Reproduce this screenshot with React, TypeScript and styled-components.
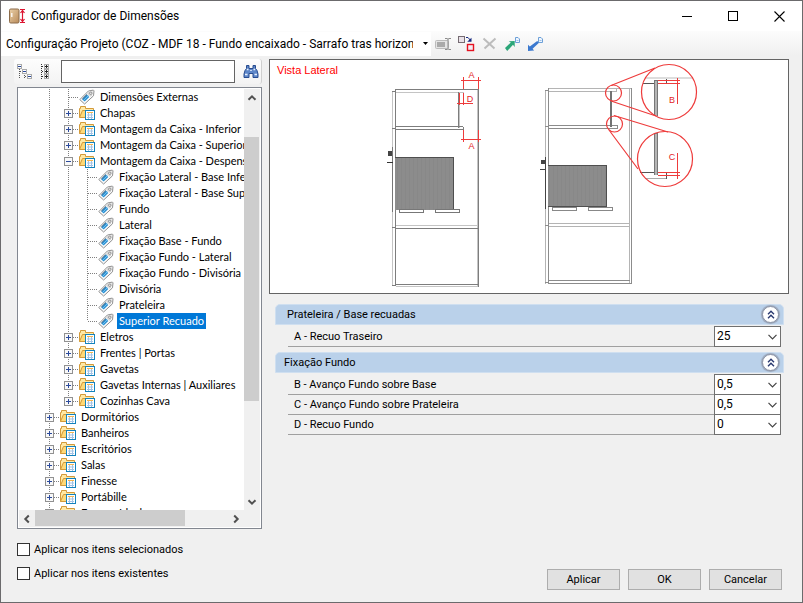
import React from 'react';
import styled, { createGlobalStyle } from 'styled-components';

const Global = createGlobalStyle`
  * { box-sizing: border-box; }
  html, body { margin: 0; background: #f0f0f0; }
  body, button, select, input { font-family: Roboto, "Liberation Sans", sans-serif; font-size: 11px; color: #000; }
  button, select, input { margin: 0; padding: 0; border: 0; border-radius: 0; background: none; }
  svg { display: block; flex: none; }
`;

const Window = styled.div`
  display: flex; flex-direction: column; height: 100vh; min-height: 480px;
  border: 1px solid #6b6a6c; background: #f0f0f0;
`;
const TitleBar = styled.header`
  display: flex; align-items: center; height: 30px; padding-left: 8px; background: #fff;
`;
const Title = styled.h1`
  flex: 1; margin: 0 0 0 5px; font-size: 12px; font-weight: 400;
`;
const WindowButton = styled.button`
  display: grid; place-items: center; width: 46px; height: 30px;
`;
const ToolBar = styled.div`
  display: flex; align-items: center; height: 25px;
  background: linear-gradient(#fcfcfc, #f0f0f0);
`;
const ProjectPicker = styled.label`
  position: relative; flex: 0 1 430px; min-width: 0; background: #fff;
  svg { position: absolute; right: 3px; top: 10px; pointer-events: none; }
`;
const ProjectSelect = styled.select`
  appearance: none; width: 100%; height: 24px; padding: 0 18px 0 5px; overflow: hidden;
  font-size: 12px; background: #fff;
`;
const Tools = styled.div`
  display: flex; gap: 3px; margin-left: 2px;
`;
const ToolButton = styled.button`
  display: grid; place-items: center; width: 20px; height: 22px;
`;
const Body = styled.main`
  display: flex; flex: 1; min-height: 0; gap: 7px; padding: 3px 13px 12px 13px;
`;
const Side = styled.div`
  display: flex; flex-direction: column; flex: 0 0 248px; min-height: 0;
`;
const SearchBar = styled.div`
  display: flex; align-items: center; height: 25px; padding-left: 1px;
  border-right: 1px solid #cfcfcf; border-radius: 3px;
  background: linear-gradient(#fdfdfd, #f3f3f3);
`;
const SearchInput = styled.input`
  flex: 1; min-width: 0; height: 23px; margin: 0 6px; padding: 0 4px;
  border: 1px solid #646464; background: #fff;
`;
const TreePane = styled.div`
  display: grid; grid-template-columns: minmax(0, 1fr) 16px; grid-template-rows: minmax(0, 1fr) 17px;
  flex: 1; min-height: 0; margin: 3px 0 0 3px; padding: 1px;
  border: 1px solid #828790; background: #fff;
`;
const Tree = styled.ul`
  margin: 0; padding: 0 0 0 21px; overflow: hidden; list-style: none;
  font-family: Lato, "Liberation Sans", sans-serif;
`;
const TreeRow = styled.li`
  display: flex; height: 16px; white-space: nowrap;
`;
const TreeIcon = styled.span`
  width: 20px; flex: none; padding-left: 1px;
`;
const TreeLabel = styled.span<{ $selected?: boolean }>`
  padding: 0 2px; line-height: 16px;
  color: ${p => (p.$selected ? '#fff' : '#000')};
  background: ${p => (p.$selected ? '#0078d7' : 'transparent')};
`;
const ScrollBar = styled.div<{ $horizontal?: boolean }>`
  display: flex; flex-direction: ${p => (p.$horizontal ? 'row' : 'column')}; background: #f0f0f0;
`;
const ScrollArrow = styled.button`
  display: grid; place-items: center; flex: none; width: 16px; height: 17px;
`;
const Track = styled.div<{ $horizontal?: boolean }>`
  display: flex; flex: 1; flex-direction: ${p => (p.$horizontal ? 'row' : 'column')};
`;
const Space = styled.div<{ $grow: number }>`
  flex: ${p => p.$grow} 1 0;
`;
const Thumb = styled.div<{ $grow: number; $horizontal?: boolean }>`
  flex: ${p => p.$grow} 1 0; background: #cdcdcd;
  margin: ${p => (p.$horizontal ? '0 0 1px' : '0 1px 0 0')};
`;
const Corner = styled.div`
  background: #f0f0f0;
`;
const Checks = styled.div`
  display: flex; flex-direction: column; gap: 8px; padding: 12px 0 9px 3px;
`;
const CheckLabel = styled.label`
  display: flex; align-items: center; gap: 4px; height: 16px;
`;
const CheckBox = styled.input`
  appearance: none; width: 13px; height: 13px; border: 1px solid #333; background: #fff;
  &:checked { background: #0078d7; }
`;
const Content = styled.div`
  display: flex; flex-direction: column; flex: 1; min-width: 0;
`;
const Viewer = styled.section`
  border: 1px solid #646464; background: #fff; overflow: hidden;
`;
const Params = styled.div`
  display: flex; flex-direction: column; gap: 5px; padding: 10px 5px 0 6px;
`;
const GroupHeader = styled.h2<{ $indent: number }>`
  display: flex; align-items: center; justify-content: space-between; height: 21px;
  margin: 0 0 2px; padding: 0 4px 0 ${p => p.$indent}px;
  border: 1px solid #cfdff0; border-radius: 5px 5px 0 0; background: #bad1ea;
  font-size: 11px; font-weight: 400;
`;
const CollapseButton = styled.button`
  display: grid; place-items: center; width: 17px; height: 17px;
  border: 1px solid #8a93a6; border-radius: 50%; background: #fff;
  box-shadow: 0 0 1px 1px #9aa5b8;
`;
const ParamRow = styled.label`
  display: flex; align-items: flex-end; height: 20px; margin: 0 3px 0 13px;
  border-bottom: 1px solid #a0a0a0;
`;
const ParamName = styled.span`
  flex: 1; padding-left: 6px; line-height: 18px;
`;
const ValueBox = styled.span`
  position: relative; width: 67px; height: 21px; margin-bottom: -1px;
  svg { position: absolute; right: 4px; top: 8px; pointer-events: none; }
`;
const ValueSelect = styled.select`
  appearance: none; display: block; width: 100%; height: 100%; padding: 0 16px 2px 2px;
  border: 1px solid #707070; background: #fff; font-size: 12px;
`;
const Footer = styled.footer`
  display: flex; justify-content: flex-end; gap: 8px; margin-top: auto; padding-right: 7px;
`;
const PushButton = styled.button`
  width: 73px; height: 21px; border: 1px solid #adadad; background: #e1e1e1; font-size: 11px;
`;

type Kind = 'folder' | 'tag';
type Node = { text: string; level: number; kind: Kind; open?: boolean; selected?: boolean; last?: boolean };
const f = (text: string, level: number, extra: Partial<Node> = {}): Node => ({ text, level, kind: 'folder', ...extra });
const t = (text: string, level: number, extra: Partial<Node> = {}): Node => ({ text, level, kind: 'tag', ...extra });

const nodes: Node[] = [
  t('Dimensões Externas', 1),
  f('Chapas', 1),
  f('Montagem da Caixa - Inferior', 1),
  f('Montagem da Caixa - Superior', 1),
  f('Montagem da Caixa - Despensa', 1, { open: true }),
  t('Fixação Lateral - Base Inferior', 2),
  t('Fixação Lateral - Base Superior', 2),
  t('Fundo', 2),
  t('Lateral', 2),
  t('Fixação Base - Fundo', 2),
  t('Fixação Fundo - Lateral', 2),
  t('Fixação Fundo - Divisória', 2),
  t('Divisória', 2),
  t('Prateleira', 2),
  t('Superior Recuado', 2, { selected: true, last: true }),
  f('Eletros', 1),
  f('Frentes | Portas', 1),
  f('Gavetas', 1),
  f('Gavetas Internas | Auxiliares', 1),
  f('Cozinhas Cava', 1, { last: true }),
  f('Dormitórios', 0),
  f('Banheiros', 0),
  f('Escritórios', 0),
  f('Salas', 0),
  f('Finesse', 0),
  f('Portábille', 0),
  f('Formas Ideal', 0),
];

const Expander = ({ x, y, open }: { x: number; y: number; open?: boolean }) => (
  <g>
    <rect x={x + 0.5} y={y + 0.5} width="8" height="8" rx="1" fill="#f8f8f8" stroke="#919191" />
    <path d={`M${x + 2} ${y + 4.5}h5${open ? '' : `M${x + 4.5} ${y + 2}v5`}`} stroke="#2b4a9b" />
  </g>
);

const Guides = ({ node }: { node: Node }) => (
  <svg width={(node.level + 1) * 19} height="16" fill="none" shapeRendering="crispEdges">
    {Array.from({ length: node.level + 1 }, (_, i) => {
      const own = i === node.level;
      return <path key={i} d={`M${i * 19 + 9.5} 0v${own && node.last ? 8 : 16}`} stroke="#808080" strokeDasharray="1 1" />;
    })}
    <path d={`M${node.level * 19 + 10} 8.5h9`} stroke="#808080" strokeDasharray="1 1" />
    {node.kind === 'folder' && <Expander x={node.level * 19 + 5} y={4} open={node.open} />}
  </svg>
);

const FolderIcon = () => (
  <svg width="17" height="16" viewBox="0 0 17 16" fill="none">
    <path d="M.5 12.500V3.500h1v-2h5v2h8v6" fill="#ffe9a6" stroke="#d39a3a" />
    <path d="M.5 12.500 3.500 5.500h11l-2 7z" fill="#ffd977" stroke="#d39a3a" />
    <rect x="6.500" y="5.500" width="9" height="9" fill="#fff" stroke="#1483bd" />
    <path d="M8 7.500h6" stroke="#f4b44f" />
    <path d="M8 10h6M8 12.500h6M9.500 8v6M12.500 8v6" stroke="#a3c4e6" />
  </svg>
);
const TagIcon = () => (
  <svg width="16" height="16" viewBox="0 0 16 16" fill="none">
    <path d="M.8 10.600 9.400 2l4.900-.9.700.7-.5 5L5.600 15z" fill="#fafafa" stroke="#8f8f8f" strokeLinejoin="round" />
    <path d="m9.700 3 4-.8-.6 4-1.500 1.600-3.500-3.200z" fill="#d5d5d5" />
    <circle cx="11.800" cy="4.200" r="1.200" fill="#fff" stroke="#777" strokeWidth=".8" />
    <path d="m3.300 10.200 4.600-4.600 2.400 2.400-4.600 4.600z" fill="#2b91d4" />
    <path d="m4.500 11.500 4.800-4.800" stroke="#75c3ef" />
    <path d="m3.200 10.200 4.700-4.700" stroke="#315b7b" />
  </svg>
);

const Chevron = ({ turn = 0 }: { turn?: number }) => (
  <svg width="10" height="10" viewBox="0 0 10 10" fill="none">
    <path transform={`rotate(${turn} 5 5)`} d="M1.500 3.200 5 6.700l3.500-3.500" stroke="#505050" strokeWidth="2" />
  </svg>
);
const SelectArrow = () => (
  <svg width="9" height="6" viewBox="0 0 9 6" fill="none">
    <path d="M.5.800l4 4 4-4" stroke="#444" strokeWidth="1.200" />
  </svg>
);
const DoubleUp = () => (
  <svg width="8" height="9" viewBox="0 0 8 9" fill="none">
    <path d="M1 4.200 4 1.200l3 3M1 8.200l3-3 3 3" stroke="#29386f" strokeWidth="1.400" />
  </svg>
);

const AppIcon = () => (
  <svg width="17" height="17" viewBox="0 0 17 17" fill="none">
    <defs><linearGradient id="wood" x2="1" y2="1"><stop stopColor="#ead0a8" /><stop offset="1" stopColor="#b98b5a" /></linearGradient></defs>
    <rect x=".5" y="1" width="9.500" height="14" rx="1.300" fill="url(#wood)" stroke="#8b6b4a" />
    <path d="M2.800 5v4" stroke="#fff" strokeWidth="1.300" />
    <path d="M11 1.500h5M11 14.500h5M13.500 2v12M11.500 5l2-2.500 2 2.500M11.500 11l2 2.500 2-2.500" stroke="#dc1430" strokeWidth="1.200" />
  </svg>
);
const CollapseTreeIcon = () => (
  <svg width="16" height="17" viewBox="0 0 16 17" fill="none" shapeRendering="crispEdges">
    <path d="M2.500 6v10M3 8.500h3M7.500 10v6M8 13.500h3" stroke="#555" strokeDasharray="1 1" />
    <rect x=".5" y="1.500" width="4" height="4" fill="#fff" stroke="#aaa" /><path d="M1 3.500h3" stroke="#29499c" />
    <rect x="5.500" y="6.500" width="4" height="4" fill="#fff" stroke="#aaa" /><path d="M6 8.500h3" stroke="#29499c" />
    <rect x="10.500" y="11.500" width="4" height="4" fill="#fff" stroke="#aaa" /><path d="M11 13.500h3" stroke="#29499c" />
  </svg>
);
const ExpandTreeIcon = () => (
  <svg width="10" height="17" viewBox="0 0 10 17" fill="none" shapeRendering="crispEdges">
    <path d="M1.500 1v15M2 3.500h2M2 8.500h2M2 13.500h2" stroke="#333" strokeDasharray="1 1" />
    {[1, 6, 11].map(y => (
      <g key={y}>
        <rect x="4.500" y={y + 0.5} width="4" height="4" fill="#fff" stroke="#aaa" />
        <path d={`M5 ${y + 2.5}h3M6.500 ${y + 1}v3`} stroke="#222" />
      </g>
    ))}
  </svg>
);
const Binoculars = () => (
  <svg width="16" height="15" viewBox="0 0 16 15" fill="none">
    <path d="M3.500 1.500h2.500v3h4v-3h2.500v3l1.500 2 1 3.500v3.500H10V9.500H6v4H1V10l1-3.500 1.500-2z" fill="#5d86c8" stroke="#284c90" />
    <path d="M2 10.500h2.500M11.500 10.500h2.500M3.800 5.500h1.700M10.500 5.500h1.700" stroke="#e5effd" strokeWidth="1.600" />
    <path d="M7 6.500h2" stroke="#c7d8f3" />
  </svg>
);
const RenameIcon = () => (
  <svg width="17" height="14" viewBox="0 0 17 14" fill="none">
    <rect x=".5" y="3.500" width="13" height="8" rx="1" fill="#e4e4e4" stroke="#bbb" />
    <rect x="2" y="5" width="8" height="5" fill="#aaa" />
    <path d="M10 1.500h2l1 .7 1-.7h2M13 2v9.500M10 12.500h2l1-.7 1 .7h2" stroke="#8c8c8c" />
  </svg>
);
const ReplaceIcon = () => (
  <svg width="17" height="17" viewBox="0 0 17 17" fill="none">
    <rect x=".5" y="1.500" width="6" height="6" fill="#e9e2e8" stroke="#756b72" />
    <path d="M8 2.500h2l2.500 2.800" stroke="#182a80" /><path d="M13.500 2.800v4H9.200z" fill="#182a80" />
    <rect x="9.500" y="9.500" width="6" height="6" fill="#f3edf4" stroke="#e51220" strokeWidth="1.400" />
  </svg>
);
const DeleteIcon = () => (
  <svg width="15" height="13" viewBox="0 0 15 13" fill="none">
    <path d="m1.500 1.500 11 10M13.500 1.500l-11 10" stroke="#bcbcbc" strokeWidth="2" />
  </svg>
);
const ArrowPage = ({ up }: { up?: boolean }) => (
  <svg width="17" height="16" viewBox="0 0 17 16" fill="none">
    <path d="M11.500 1.500h2.500l1.500 1.500v3.500h-4z" fill="#eef6ff" stroke="#6da0d8" /><path d="M12.500 4.500h2" stroke="#9bc0e7" />
    {up
      ? <path d="M1 12 6.800 6.500 4.700 5.200l6-.1v5.800L9 8.800 3.200 15z" fill="#2ba678" />
      : <path d="M10.200 5 12 6.800l-6.400 6 1.500 1.800L1 15V8.800l1.800 1.800z" fill="#3b79cf" />}
  </svg>
);

const Drawing = () => (
  <svg width="518" height="233" viewBox="270 60 518 233" fill="none" fontFamily="Liberation Sans, Arial, sans-serif">
    <defs>
      <pattern id="grain" width="4" height="4" patternUnits="userSpaceOnUse">
        <rect width="4" height="4" fill="#8c8c8c" /><path d="M1.500 0v4" stroke="#888888" />
      </pattern>
    </defs>
    <text x="277" y="74" fontSize="11" fill="#ff0000">Vista Lateral</text>

    <g shapeRendering="crispEdges">
      <path d="M395 92.500h68M459.500 92v36M477.500 90v196M392.500 91v195M395 225.500h83M396 286.500h82M463.500 92v4" stroke="#c4c4c4" />
      <path d="M395.500 286V89.500h83V287M395 126.500h68M395 129.500h68v-3M458.500 92v36M395 228.500h83M395 284.500h83M392 91.500h4M392 128.500h4M392 227.500h4M392 285.500h4" stroke="#7d7d7d" />
      <path d="M392.500 147v65" stroke="#777" />
      <path d="M387 162.500h6" stroke="#333" />
      <rect x="388" y="151" width="4" height="5" fill="#444" />
      <rect x="395" y="157" width="59" height="53" fill="url(#grain)" />
      <path d="M395 157.500h58.500V210" stroke="#4f4f4f" />
      <rect x="399.500" y="209.500" width="24" height="3" fill="#fff" stroke="#777" />
      <rect x="435.500" y="209.500" width="24" height="3" fill="#fff" stroke="#777" />

      <path d="M549 91.500h67v-3M629.500 89v194M549 223.500h81M549 226.500h81M545.500 91v193M549 88.500h83" stroke="#b4b4b4" />
      <path d="M548.500 284V88M631.500 88v195.500h-83M549 125.500h68v3h-68M549 280.500h81M545 90.500h4M545 126.500h4M545 225.500h4M545 282.500h4" stroke="#8c8c8c" />
      <path d="M611 91v36" stroke="#737373" strokeWidth="2" />
      <path d="M545.500 157v52M540 169.500h6" stroke="#444" />
      <rect x="541" y="160" width="4" height="4" fill="#444" />
      <rect x="549" y="165" width="58" height="42" fill="url(#grain)" />
      <path d="M548 165.500h58.500v41H548" stroke="#4f4f4f" />
      <rect x="552.500" y="207.500" width="24" height="3" fill="#fff" stroke="#888" />
      <rect x="588.500" y="207.500" width="24" height="3" fill="#fff" stroke="#888" />

      <path d="M646 78h46" stroke="#ddd" strokeWidth="2" />
      <path d="M643 83.500h11M657 83.500h9.500v-5" stroke="#555" />
      <path d="M640 172.500h14M657 172.500h9.500v6" stroke="#555" />
      <path d="M645 178.500h21" stroke="#aaa" />
      <path d="M656 80v36M656 133v42" stroke="#777" strokeWidth="4" />
      <path d="M656 81v35M656 134v41" stroke="#b5b5b5" strokeWidth="2" />
    </g>

    <g stroke="#ee3b3b" shapeRendering="crispEdges">
      <path d="M461 80.500h20M463.500 77v12M478.500 77v12M461 139.500h20M463.500 130v12M478.500 130v12M459.500 93v12M463.500 93v12M457 103.500h16" />
      <path d="M658 80.500h22M658 83.500h22M677.500 78v26M658 172.500h22M658 175.500h22M677.500 153v26" />
    </g>
    <g stroke="#ee3b3b" strokeWidth="1.200">
      <circle cx="613.500" cy="93" r="8" /><circle cx="614.500" cy="124" r="8" />
      <circle cx="669" cy="92" r="27.500" /><circle cx="665" cy="159" r="27.500" />
      <path d="M611 85.500 655 68M611 101l45 15M614 115.500l54 16.500M609 130l29 39" />
    </g>
    <g fill="#e32626" fontSize="9" textAnchor="middle">
      <text x="471.500" y="78">A</text><text x="471.500" y="149">A</text><text x="470" y="102">D</text>
      <text x="672" y="103">B</text><text x="672" y="160">C</text>
    </g>
  </svg>
);

type Param = { name: string; value: string };
const groups: { title: string; indent: number; params: Param[] }[] = [
  { title: 'Prateleira / Base recuadas', indent: 11, params: [{ name: 'A - Recuo Traseiro', value: '25' }] },
  {
    title: 'Fixação Fundo', indent: 8, params: [
      { name: 'B - Avanço Fundo sobre Base', value: '0,5' },
      { name: 'C - Avanço Fundo sobre Prateleira', value: '0,5' },
      { name: 'D - Recuo Fundo', value: '0' },
    ],
  },
];

export default function App() {
  return (
    <>
      <Global />
      <Window>
        <TitleBar>
          <AppIcon />
          <Title>Configurador de Dimensões</Title>
          <WindowButton aria-label="Minimizar">
            <svg width="10" height="11"><path d="M0 5.500h10" stroke="#000" /></svg>
          </WindowButton>
          <WindowButton aria-label="Maximizar">
            <svg width="10" height="10"><rect x=".5" y=".5" width="9" height="9" fill="none" stroke="#000" /></svg>
          </WindowButton>
          <WindowButton aria-label="Fechar">
            <svg width="11" height="11"><path d="M.5.500l10 10M10.500.500l-10 10" stroke="#000" strokeWidth="1.100" /></svg>
          </WindowButton>
        </TitleBar>
        <ToolBar>
          <ProjectPicker>
            <ProjectSelect aria-label="Configuração">
              <option>Configuração Projeto (COZ - MDF 18 - Fundo encaixado - Sarrafo tras horizontal)</option>
            </ProjectSelect>
            <svg width="5" height="4"><path d="M0 0h5L2.500 3z" /></svg>
          </ProjectPicker>
          <Tools>
            <ToolButton aria-label="Renomear"><RenameIcon /></ToolButton>
            <ToolButton aria-label="Substituir"><ReplaceIcon /></ToolButton>
            <ToolButton aria-label="Excluir"><DeleteIcon /></ToolButton>
            <ToolButton aria-label="Exportar"><ArrowPage up /></ToolButton>
            <ToolButton aria-label="Importar"><ArrowPage /></ToolButton>
          </Tools>
        </ToolBar>
        <Body>
          <Side>
            <SearchBar>
              <ToolButton aria-label="Recolher"><CollapseTreeIcon /></ToolButton>
              <ToolButton aria-label="Expandir"><ExpandTreeIcon /></ToolButton>
              <SearchInput aria-label="Pesquisar" />
              <ToolButton aria-label="Localizar"><Binoculars /></ToolButton>
            </SearchBar>
            <TreePane>
              <Tree>
                {nodes.map(n => (
                  <TreeRow key={n.text}>
                    <Guides node={n} />
                    <TreeIcon>{n.kind === 'folder' ? <FolderIcon /> : <TagIcon />}</TreeIcon>
                    <TreeLabel $selected={n.selected}>{n.text}</TreeLabel>
                  </TreeRow>
                ))}
              </Tree>
              <ScrollBar>
                <ScrollArrow aria-label="Acima"><Chevron turn={180} /></ScrollArrow>
                <Track><Space $grow={31} /><Thumb $grow={265} /><Space $grow={92} /></Track>
                <ScrollArrow aria-label="Abaixo"><Chevron /></ScrollArrow>
              </ScrollBar>
              <ScrollBar $horizontal>
                <ScrollArrow aria-label="Esquerda"><Chevron turn={90} /></ScrollArrow>
                <Track $horizontal><Thumb $grow={148} $horizontal /><Space $grow={43} /></Track>
                <ScrollArrow aria-label="Direita"><Chevron turn={-90} /></ScrollArrow>
              </ScrollBar>
              <Corner />
            </TreePane>
            <Checks>
              <CheckLabel><CheckBox type="checkbox" />Aplicar nos itens selecionados</CheckLabel>
              <CheckLabel><CheckBox type="checkbox" />Aplicar nos itens existentes</CheckLabel>
            </Checks>
          </Side>
          <Content>
            <Viewer aria-label="Vista Lateral"><Drawing /></Viewer>
            <Params>
              {groups.map(g => (
                <section key={g.title}>
                  <GroupHeader $indent={g.indent}>
                    {g.title}
                    <CollapseButton aria-label={`Recolher ${g.title}`}><DoubleUp /></CollapseButton>
                  </GroupHeader>
                  {g.params.map(p => (
                    <ParamRow key={p.name}>
                      <ParamName>{p.name}</ParamName>
                      <ValueBox>
                        <ValueSelect defaultValue={p.value}><option>{p.value}</option></ValueSelect>
                        <SelectArrow />
                      </ValueBox>
                    </ParamRow>
                  ))}
                </section>
              ))}
            </Params>
            <Footer>
              <PushButton>Aplicar</PushButton>
              <PushButton>OK</PushButton>
              <PushButton>Cancelar</PushButton>
            </Footer>
          </Content>
        </Body>
      </Window>
    </>
  );
}
